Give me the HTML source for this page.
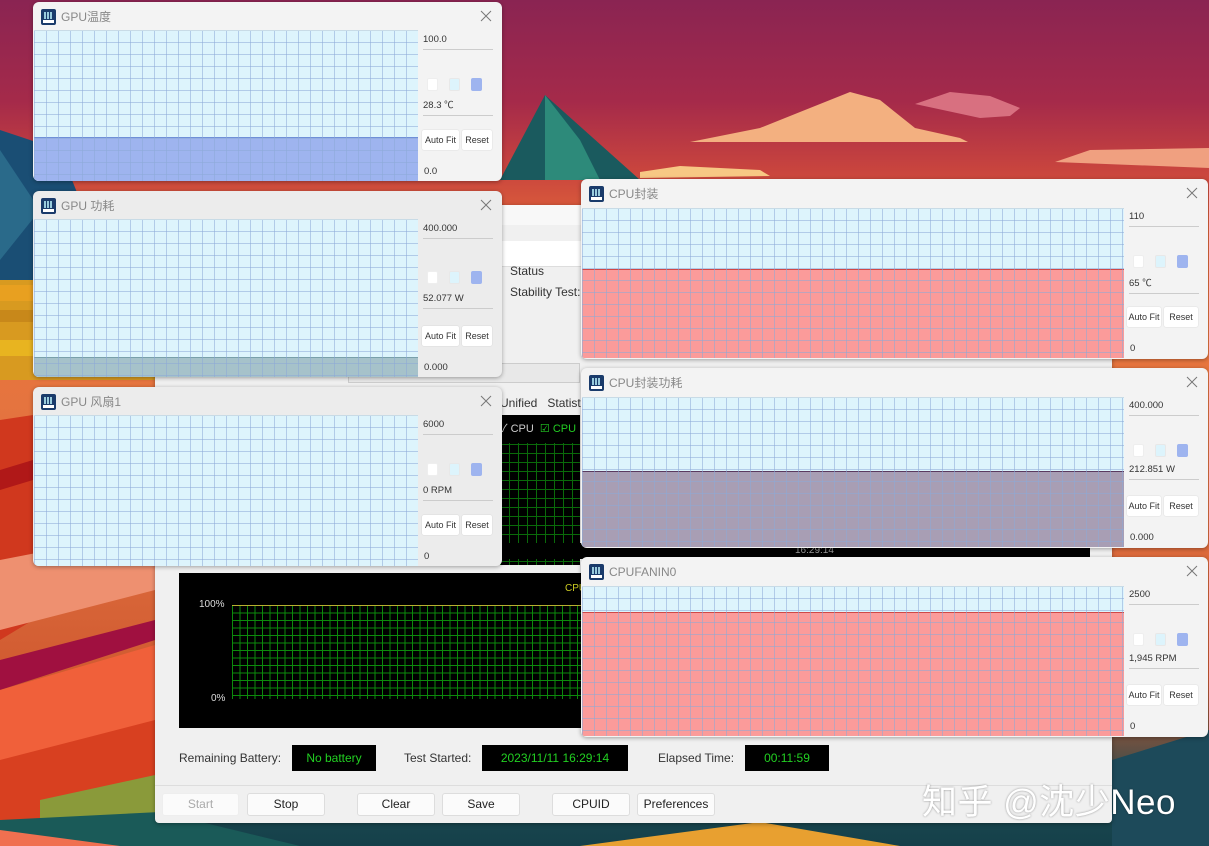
<!DOCTYPE html>
<html><head><meta charset="utf-8"><style>
*{margin:0;padding:0;box-sizing:border-box}
body{width:1209px;height:846px;overflow:hidden;position:relative;font-family:"Liberation Sans","Noto Sans CJK SC",sans-serif;background:linear-gradient(180deg,#8a2452 0%,#a52a4a 12%,#c8443e 20%,#e0643a 27%,#e8763e 40%,#e07040 60%,#d05a30 80%,#1c4a50 94%,#15404a 100%)}
.abs{position:absolute}
.win{position:absolute;background:#f3f3f3;border-radius:6px;box-shadow:0 1px 4px rgba(0,0,0,.35);overflow:hidden}
.tt{position:absolute;left:8px;top:6px;height:18px;font-size:12px;color:#888;line-height:18px;padding-left:20px}
.ic{position:absolute;left:0;top:1px;width:15px;height:16px;background:#1a3b6b;border-radius:2px}
.ic:before{content:"";position:absolute;left:3px;top:3px;width:9px;height:7px;background:repeating-linear-gradient(90deg,#9cd 0 2px,#1a3b6b 2px 3px)}
.ic:after{content:"";position:absolute;left:2px;bottom:2px;width:11px;height:3px;background:#fff}
.x{position:absolute;right:10px;top:8px;width:12px;height:12px}
.ch{position:absolute;left:1px;top:28px;background:#ddf4fc;overflow:hidden;border-top:1px solid #c8dbe6}
.gr{position:absolute;inset:0;background-image:linear-gradient(90deg,rgba(140,170,215,.55) 1px,transparent 1px),linear-gradient(0deg,rgba(140,170,215,.55) 1px,transparent 1px);background-size:12px 12px}
.fl{position:absolute;left:0;right:0;bottom:0}
.rp{position:absolute;top:28px;font-size:9.5px;color:#333}
.rp .v{position:absolute;left:5px;width:70px;border-bottom:1.5px solid #ccc;padding-bottom:4px}
.rp .b{position:absolute;height:20px;background:#fff;border-radius:2px;font-size:9px;line-height:20px;text-align:center;box-shadow:0 0 1px #bbb}
.rp .sq{position:absolute;width:11px;height:13px;top:0;border-radius:2px}
.mb{position:absolute;background:#fbfbfb;border:1px solid #ddd;border-radius:3px;font-size:12px;text-align:center;line-height:21px;height:23px;color:#222}
.lbl{position:absolute;font-size:12px;color:#333}
.bx{position:absolute;background:#000;color:#22d022;font-size:12px;text-align:center;line-height:26px;height:26px}
</style></head><body>

<svg class="abs" style="left:0;top:0" width="1209" height="846">
<polygon points="0,130 60,150 120,300 0,300" fill="#1a4e74"/>
<polygon points="0,150 40,210 0,260" fill="#2a6a8a"/>
<polygon points="500,180 545,95 640,180" fill="#1a5a5e"/>
<polygon points="545,95 580,140 600,180 545,180" fill="#2d8a7a"/>
<polygon points="0,280 160,280 160,380 0,380" fill="#d89a20"/>
<rect x="0" y="285" width="40" height="16" fill="#e8a020"/>
<rect x="0" y="310" width="40" height="12" fill="#c8881a"/>
<rect x="0" y="340" width="40" height="16" fill="#e8b420"/>
<polygon points="0,420 33,415 33,620 0,640" fill="#d0381e"/>
<polygon points="0,470 33,460 33,480 0,490" fill="#b01818"/>
<polygon points="0,560 155,530 155,590 0,630" fill="#ee9070"/>
<polygon points="0,660 155,620 155,640 0,690" fill="#a01040"/>
<polygon points="0,690 155,645 155,760 0,800" fill="#f0603a"/>
<polygon points="0,760 155,720 155,800 0,846" fill="#d84020"/>
<polygon points="40,800 155,775 155,820 40,830" fill="#8a9a3a"/>
<polygon points="0,820 160,812 300,846 0,846" fill="#1a5a58"/>
<polygon points="0,830 120,846 0,846" fill="#f07050"/>
<polygon points="580,846 760,822 900,846" fill="#e8a030"/>
<polygon points="1112,760 1209,730 1209,846 1112,846" fill="#1d4a5a"/>
<path d="M690,142 L760,128 L800,112 L850,92 L880,100 L915,128 L960,138 L968,142 Z" fill="#f3b080"/>
<path d="M915,104 L950,92 L990,96 L1020,108 L1010,116 L980,118 Z" fill="#d87080"/>
<path d="M1055,162 L1090,150 L1209,148 L1209,168 Z" fill="#f0a080"/>
<path d="M640,172 L680,166 L760,170 L770,176 L640,178 Z" fill="#f7c884"/>
</svg>

<div class="win" style="left:155px;top:205px;width:957px;height:618px;background:#f0f0f0;border-radius:4px">
  <div class="abs" style="left:0;top:0;width:957px;height:20px;background:#f8f8f8"></div>
  <div class="abs" style="left:0;top:36px;width:957px;height:26px;background:#fff;border-bottom:1px solid #ddd"></div>
  <div class="abs" style="left:193px;top:158px;width:232px;height:20px;background:#e8e8e8;border:1px solid #ccc"></div>
  <div class="lbl" style="left:355px;top:59px">Status</div>
  <div class="lbl" style="left:355px;top:80px">Stability Test:</div>
  <div class="lbl" style="left:345px;top:191px">Unified&nbsp;&nbsp; Statisti</div>
  <div class="abs" style="left:345px;top:210px;width:80px;height:150px;background:#000;background-image:linear-gradient(90deg,#0a6a0a 1px,transparent 1px),linear-gradient(0deg,#0a6a0a 1px,transparent 1px);background-size:9px 9px;background-position:0 30px"></div>
  <div class="abs" style="left:345px;top:210px;width:80px;height:28px;background:#000;font-size:11px;color:#ccc;line-height:28px">&#10003; CPU &nbsp;<span style="color:#2c2">&#9745; CPU</span></div>
  <div class="abs" style="left:50px;top:338px;width:885px;height:16px;background:#000"></div>
  <div class="abs" style="left:640px;top:340px;font-size:10px;color:#999">16:29:14</div>
  <div class="abs" style="left:24px;top:368px;width:410px;height:155px;background:#000"></div>
  <div class="abs" style="left:77px;top:400px;width:357px;height:94px;background-image:linear-gradient(90deg,#0c8a0c 1px,transparent 1px),linear-gradient(0deg,#0c8a0c 1px,transparent 1px);background-size:7.5px 7.5px;border-top:1.5px solid #b8b030"></div>
  <div class="abs" style="left:410px;top:378px;font-size:10px;color:#cc2">CPU</div>
  <div class="abs" style="left:44px;top:394px;font-size:10px;color:#ddd">100%</div>
  <div class="abs" style="left:56px;top:488px;font-size:10px;color:#ddd">0%</div>
  <div class="lbl" style="left:24px;top:546px">Remaining Battery:</div>
  <div class="bx" style="left:137px;top:540px;width:84px">No battery</div>
  <div class="lbl" style="left:249px;top:546px">Test Started:</div>
  <div class="bx" style="left:327px;top:540px;width:146px">2023/11/11 16:29:14</div>
  <div class="lbl" style="left:503px;top:546px">Elapsed Time:</div>
  <div class="bx" style="left:590px;top:540px;width:84px">00:11:59</div>
  <div class="abs" style="left:0;top:580px;width:957px;height:1px;background:#ddd"></div>
  <div class="mb" style="left:7px;top:588px;width:77px;color:#aaa;border-color:#eee">Start</div>
  <div class="mb" style="left:92px;top:588px;width:78px">Stop</div>
  <div class="mb" style="left:202px;top:588px;width:78px">Clear</div>
  <div class="mb" style="left:287px;top:588px;width:78px">Save</div>
  <div class="mb" style="left:397px;top:588px;width:78px">CPUID</div>
  <div class="mb" style="left:482px;top:588px;width:78px">Preferences</div>
</div>

<div class="win" style="left:33px;top:2px;width:469px;height:179px">
  <div class="tt"><span class="ic"></span>GPU温度</div><svg class="x" viewBox="0 0 12 12"><path d="M1 1L11 11M11 1L1 11" stroke="#777" stroke-width="1"/></svg>
  <div class="ch" style="width:384px;height:151px"><div class="fl" style="height:44px;background:#9eb4ef;border-top:1px solid #6f8fd8"></div><div class="gr"></div></div>
  <div class="rp" style="left:385px;width:84px;height:151px">
    <div class="v" style="top:4px">100.0</div>
    <div class="sq" style="left:9px;top:48px;background:#fff;border:1px solid #eee"></div>
    <div class="sq" style="left:31px;top:48px;background:#ddf4fc;border:1px solid #e8e8e8"></div>
    <div class="sq" style="left:53px;top:48px;background:#9eb4ef"></div>
    <div class="v" style="top:67px">28.3 ℃</div>
    <div class="b" style="left:4px;top:100px;width:37px">Auto Fit</div>
    <div class="b" style="left:44px;top:100px;width:30px">Reset</div>
    <div style="position:absolute;left:6px;top:136px">0.0</div>
  </div>
</div>

<div class="win" style="left:33px;top:191px;width:469px;height:186px;background:#ececec">
  <div class="tt"><span class="ic"></span>GPU 功耗</div><svg class="x" viewBox="0 0 12 12"><path d="M1 1L11 11M11 1L1 11" stroke="#777" stroke-width="1"/></svg>
  <div class="ch" style="width:384px;height:158px"><div class="fl" style="height:20px;background:#a6c2ca;border-top:1px solid #7aa0aa"></div><div class="gr"></div></div>
  <div class="rp" style="left:385px;width:84px;height:158px">
    <div class="v" style="top:4px">400.000</div>
    <div class="sq" style="left:9px;top:52px;background:#fff;border:1px solid #eee"></div>
    <div class="sq" style="left:31px;top:52px;background:#ddf4fc;border:1px solid #e8e8e8"></div>
    <div class="sq" style="left:53px;top:52px;background:#9eb4ef"></div>
    <div class="v" style="top:74px">52.077 W</div>
    <div class="b" style="left:4px;top:107px;width:37px">Auto Fit</div>
    <div class="b" style="left:44px;top:107px;width:30px">Reset</div>
    <div style="position:absolute;left:6px;top:143px">0.000</div>
  </div>
</div>

<div class="win" style="left:33px;top:387px;width:469px;height:179px;background:#ececec">
  <div class="tt"><span class="ic"></span>GPU 风扇1</div><svg class="x" viewBox="0 0 12 12"><path d="M1 1L11 11M11 1L1 11" stroke="#777" stroke-width="1"/></svg>
  <div class="ch" style="width:384px;height:151px"><div class="gr"></div></div>
  <div class="rp" style="left:385px;width:84px;height:151px">
    <div class="v" style="top:4px">6000</div>
    <div class="sq" style="left:9px;top:48px;background:#fff;border:1px solid #eee"></div>
    <div class="sq" style="left:31px;top:48px;background:#ddf4fc;border:1px solid #e8e8e8"></div>
    <div class="sq" style="left:53px;top:48px;background:#9eb4ef"></div>
    <div class="v" style="top:70px">0 RPM</div>
    <div class="b" style="left:4px;top:100px;width:37px">Auto Fit</div>
    <div class="b" style="left:44px;top:100px;width:30px">Reset</div>
    <div style="position:absolute;left:6px;top:136px">0</div>
  </div>
</div>

<div class="win" style="left:581px;top:179px;width:627px;height:180px">
  <div class="tt"><span class="ic"></span>CPU封装</div><svg class="x" viewBox="0 0 12 12"><path d="M1 1L11 11M11 1L1 11" stroke="#777" stroke-width="1"/></svg>
  <div class="ch" style="width:542px;height:150px;top:29px"><div class="fl" style="height:89px;background:#fb9b9a;border-top:1.5px solid #d04848"></div><div class="gr"></div></div>
  <div class="rp" style="left:543px;width:84px;height:150px">
    <div class="v" style="top:4px">110</div>
    <div class="sq" style="left:9px;top:48px;background:#fff;border:1px solid #eee"></div>
    <div class="sq" style="left:31px;top:48px;background:#ddf4fc;border:1px solid #e8e8e8"></div>
    <div class="sq" style="left:53px;top:48px;background:#9eb4ef"></div>
    <div class="v" style="top:68px">65 ℃</div>
    <div class="b" style="left:3px;top:100px;width:34px">Auto Fit</div>
    <div class="b" style="left:40px;top:100px;width:34px">Reset</div>
    <div style="position:absolute;left:6px;top:136px">0</div>
  </div>
</div>

<div class="win" style="left:581px;top:368px;width:627px;height:180px">
  <div class="tt"><span class="ic"></span>CPU封装功耗</div><svg class="x" viewBox="0 0 12 12"><path d="M1 1L11 11M11 1L1 11" stroke="#777" stroke-width="1"/></svg>
  <div class="ch" style="width:542px;height:150px;top:29px"><div class="fl" style="height:76px;background:#a89eb4;border-top:1.5px solid #5a3a60"></div><div class="gr"></div></div>
  <div class="rp" style="left:543px;width:84px;height:150px">
    <div class="v" style="top:4px">400.000</div>
    <div class="sq" style="left:9px;top:48px;background:#fff;border:1px solid #eee"></div>
    <div class="sq" style="left:31px;top:48px;background:#ddf4fc;border:1px solid #e8e8e8"></div>
    <div class="sq" style="left:53px;top:48px;background:#9eb4ef"></div>
    <div class="v" style="top:68px">212.851 W</div>
    <div class="b" style="left:3px;top:100px;width:34px">Auto Fit</div>
    <div class="b" style="left:40px;top:100px;width:34px">Reset</div>
    <div style="position:absolute;left:6px;top:136px">0.000</div>
  </div>
</div>

<div class="win" style="left:581px;top:557px;width:627px;height:180px">
  <div class="tt"><span class="ic"></span>CPUFANIN0</div><svg class="x" viewBox="0 0 12 12"><path d="M1 1L11 11M11 1L1 11" stroke="#777" stroke-width="1"/></svg>
  <div class="ch" style="width:542px;height:150px;top:29px"><div class="fl" style="height:124px;background:#fb9b9a;border-top:1.5px solid #d04848"></div><div class="gr"></div></div>
  <div class="rp" style="left:543px;width:84px;height:150px">
    <div class="v" style="top:4px">2500</div>
    <div class="sq" style="left:9px;top:48px;background:#fff;border:1px solid #eee"></div>
    <div class="sq" style="left:31px;top:48px;background:#ddf4fc;border:1px solid #e8e8e8"></div>
    <div class="sq" style="left:53px;top:48px;background:#9eb4ef"></div>
    <div class="v" style="top:68px">1,945 RPM</div>
    <div class="b" style="left:3px;top:100px;width:34px">Auto Fit</div>
    <div class="b" style="left:40px;top:100px;width:34px">Reset</div>
    <div style="position:absolute;left:6px;top:136px">0</div>
  </div>
</div>

<div class="abs" style="left:922px;top:774px;font-size:35px;letter-spacing:0.5px;color:#fff;text-shadow:0 0 2px rgba(0,0,0,.4);white-space:nowrap">知乎 @沈少Neo</div>
</body></html>
